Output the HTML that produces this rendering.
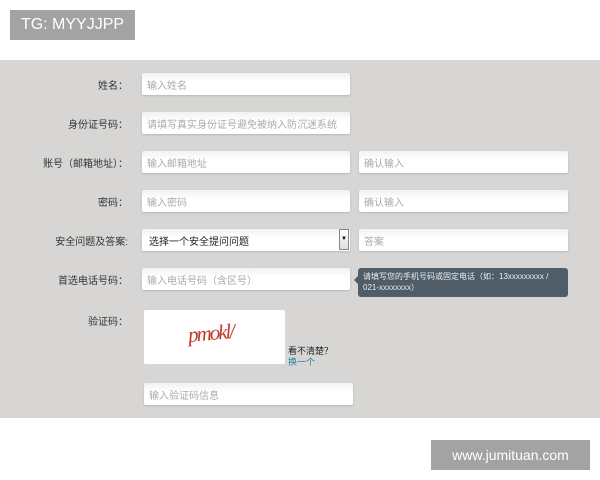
<!DOCTYPE html>
<html><head><meta charset="utf-8"><style>
body{margin:0;width:600px;height:480px;background:#fff;position:relative;overflow:hidden;font-family:"Liberation Sans","Noto Sans CJK SC",sans-serif;}
.tg{position:absolute;left:10px;top:10px;width:125px;height:30px;background:#a3a3a3;color:#fff;font-size:16px;line-height:30px;text-align:center;}
.main{position:absolute;left:0;top:60px;width:600px;height:358px;background:#d7d6d4;}
.lb{position:absolute;font-size:10px;color:#333;text-align:right;width:200px;height:22px;display:flex;align-items:center;justify-content:flex-end;}
.in{position:absolute;height:22px;background:linear-gradient(#f1f1f1,#fff 40%);border-radius:2px;box-shadow:0 1px 2px rgba(0,0,0,.15);font-size:10px;color:#aaa;padding:0 0 0 5px;box-sizing:border-box;white-space:nowrap;overflow:hidden;display:flex;align-items:center;}
.ft{position:absolute;left:431px;top:440px;width:159px;height:30px;background:#a3a3a3;color:#fff;font-size:14px;line-height:30px;text-align:center;}
</style></head><body>
<div class="tg">TG: MYYJJPP</div>
<div class="main"></div>
<div class="lb" style="right:472px;top:73px">姓名：</div>
<div class="in" style="left:142px;top:73px;width:208px">输入姓名</div>
<div class="lb" style="right:472px;top:112px">身份证号码：</div>
<div class="in" style="left:142px;top:112px;width:208px">请填写真实身份证号避免被纳入防沉迷系统</div>
<div class="lb" style="right:472px;top:151px">账号（邮箱地址）：</div>
<div class="in" style="left:142px;top:151px;width:208px">输入邮箱地址</div>
<div class="in" style="left:359px;top:151px;width:209px">确认输入</div>
<div class="lb" style="right:472px;top:190px">密码：</div>
<div class="in" style="left:142px;top:190px;width:208px">输入密码</div>
<div class="in" style="left:359px;top:190px;width:209px">确认输入</div>
<div class="lb" style="right:472px;top:229px">安全问题及答案:</div>
<div class="in" style="left:142px;top:229px;width:208px;color:#222;padding-left:7px">选择一个安全提问问题</div>
<div style="position:absolute;left:339px;top:229px;width:10px;height:21px;background:linear-gradient(#fff,#ddd);border:1px solid #888;box-sizing:border-box;font-size:6px;text-align:center;line-height:19px">▼</div>
<div class="in" style="left:359px;top:229px;width:209px">答案</div>
<div class="lb" style="right:472px;top:268px">首选电话号码：</div>
<div class="in" style="left:142px;top:268px;width:208px">输入电话号码（含区号）</div>
<div style="position:absolute;left:358px;top:268px;width:210px;height:29px;background:#4f5d68;border-radius:3px;color:#e8ecef;font-size:8px;line-height:11px;padding:3px 5px;box-sizing:border-box">请填写您的手机号码或固定电话（如：13xxxxxxxxx / 021-xxxxxxxx）</div>
<div style="position:absolute;left:354px;top:276px;width:0;height:0;border:4px solid transparent;border-right-color:#4f5d68;border-left:0"></div>
<div class="lb" style="right:472px;top:309px">验证码：</div>
<div style="position:absolute;left:144px;top:310px;width:141px;height:54px;background:#fff;border-radius:2px"></div>
<div style="position:absolute;left:188px;top:321px;font-family:'Liberation Serif',serif;font-style:italic;font-size:21px;color:#c0392b;letter-spacing:-2px;transform:rotate(-5deg)">pmokl/</div>
<div style="position:absolute;left:288px;top:344px;font-size:9px;color:#222">看不清楚？</div>
<div style="position:absolute;left:288px;top:355px;font-size:9px;color:#2a7fa5">换一个</div>
<div class="in" style="left:144px;top:383px;width:209px">输入验证码信息</div>
<div class="ft">www.jumituan.com</div>
</body></html>
